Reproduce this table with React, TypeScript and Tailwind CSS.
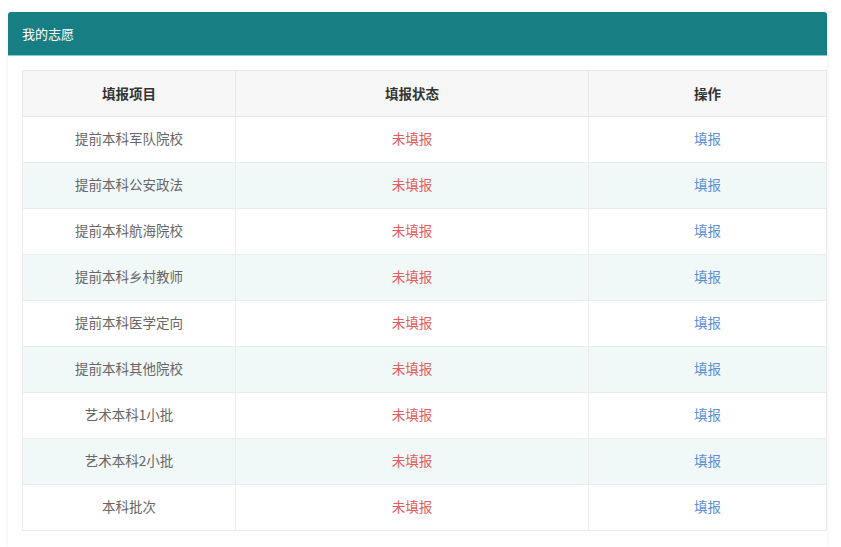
import React from "react";

const rows = [
  "提前本科军队院校",
  "提前本科公安政法",
  "提前本科航海院校",
  "提前本科乡村教师",
  "提前本科医学定向",
  "提前本科其他院校",
  "艺术本科1小批",
  "艺术本科2小批",
  "本科批次",
];

export default function App() {
  return (
    <div
      className="w-[841px] h-[547px] bg-white overflow-hidden pt-[12px] pl-[8px]"
      style={{ fontFamily: '"Noto Sans CJK SC", "Noto Sans", sans-serif' }}
    >
      <div className="w-[819px] bg-white rounded-t-[3px] shadow-[0_0_4px_rgba(0,0,0,0.08)]">
        <div className="h-[44px] bg-[#177e84] rounded-t-[3px] border-b border-[#7fcfcf] flex items-center pl-[14px] text-white text-[13px]">
          我的志愿
        </div>
        <div className="px-[14px] pt-[14px] pb-[16px]">
          <table className="w-[804px] border-collapse text-[13.5px] table-fixed">
            <colgroup>
              <col className="w-[213px]" />
              <col className="w-[353px]" />
              <col className="w-[238px]" />
            </colgroup>
            <thead>
              <tr className="h-[46px] bg-[#f7f7f7]">
                <th className="border border-[#e8e8e8] font-bold text-[#333] pb-[1px]">填报项目</th>
                <th className="border border-[#e8e8e8] font-bold text-[#333] pb-[1px]">填报状态</th>
                <th className="border border-[#e8e8e8] font-bold text-[#333] pb-[1px]">操作</th>
              </tr>
            </thead>
            <tbody>
              {rows.map((r, i) => (
                <tr key={r} className={i % 2 === 1 ? "h-[46px] bg-[#f1f8f8]" : "h-[46px] bg-white"}>
                  <td className="border border-[#ececec] text-center text-[#666] pb-[2px]">{r}</td>
                  <td className="border border-[#ececec] text-center text-[#e35d5d] pb-[2px]">未填报</td>
                  <td className="border border-[#ececec] text-center text-[#5a8fd8] pb-[2px]">填报</td>
                </tr>
              ))}
            </tbody>
          </table>
        </div>
      </div>
    </div>
  );
}
